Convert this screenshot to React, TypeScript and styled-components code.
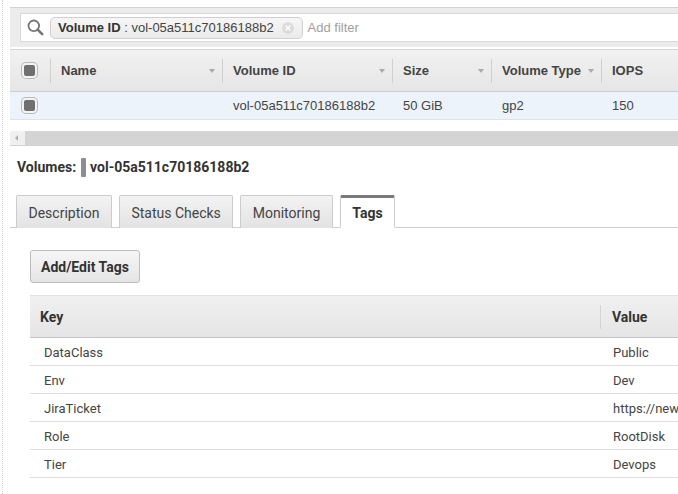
import React from "react";
import styled, { createGlobalStyle } from "styled-components";

const Global = createGlobalStyle`
  html, body { margin: 0; padding: 0; background: #fff; }
  body { width: 678px; height: 494px; overflow: hidden; font-family: Roboto, "Liberation Sans", Arial, sans-serif; }
`;

const Page = styled.div`
  margin-left: 2px;
  border-left: 1px dotted #d0d0d0;
  padding-left: 7px;
  height: 494px;
  box-sizing: border-box;
  padding-top: 7px;
`;

const FilterBar = styled.div`
  background: #ececec;
  border-top: 1px solid #d2d2d2;
  padding: 5px 0 5px 10px;
`;

const SearchBox = styled.div`
  height: 29px;
  box-sizing: border-box;
  background: #fff;
  border: 1px solid #d9d9d9;
  border-right: none;
  display: flex;
  align-items: center;
  padding-left: 6px;
  gap: 6px;
  font-family: "Liberation Sans", Arial, sans-serif;
  font-size: 13px;
`;

const Chip = styled.div`
  height: 22px;
  box-sizing: border-box;
  border: 1px solid #cfcfcf;
  border-radius: 5px;
  background: linear-gradient(#f6f6f6, #ebebeb);
  display: flex;
  align-items: center;
  padding: 0 8px 0 7px;
  color: #444;
  font-size: 13px;
  b { color: #333; }
`;

const ChipClose = styled.span`
  display: inline-flex;
  width: 12px;
  height: 12px;
  margin-left: 8px;
`;

const Placeholder = styled.span`
  color: #9f9f9f;
  margin-left: -1px;
`;

const Grid = styled.div`
  display: grid;
  grid-template-columns: 40px 172px 170px 99px 110px 1fr;
  font-family: "Liberation Sans", Arial, sans-serif;
  font-size: 13px;
  color: #444;
`;

const HeadRow = styled(Grid)`
  margin-top: 2px;
  height: 43px;
  box-sizing: border-box;
  border-top: 1px solid #d6d6d6;
  border-bottom: 1px solid #cdcdcd;
  background: linear-gradient(#f1f1f1, #e6e6e6);
  font-weight: bold;
`;

const HeadCell = styled.div<{ $sep?: boolean }>`
  position: relative;
  display: flex;
  align-items: center;
  padding: 0 7px 0 11px;
  justify-content: space-between;
  &::before {
    content: "";
    display: ${(p) => (p.$sep ? "block" : "none")};
    position: absolute;
    left: 0;
    top: 9px;
    height: 24px;
    width: 1px;
    background: #d0d0d0;
  }
`;

const CheckCell = styled.div`
  display: flex;
  align-items: center;
  padding-left: 12px;
`;

const Check = styled.span`
  display: block;
  width: 15px;
  height: 15px;
  box-sizing: border-box;
  border-radius: 4px;
  background: #6f6f6f;
  border: 2px solid #f3f3f3;
  box-shadow: 0 0 0 1px #b9b9b9;
`;

const SortArrow = styled.span`
  width: 0;
  height: 0;
  border-left: 3.5px solid transparent;
  border-right: 3.5px solid transparent;
  border-top: 4px solid #aaa;
`;

const BodyRow = styled(Grid)`
  height: 28px;
  box-sizing: border-box;
  background: #edf3fb;
  border-bottom: 1px solid #dde3ea;
`;

const BodyCell = styled.div`
  display: flex;
  align-items: center;
  padding-left: 11px;
  white-space: nowrap;
`;

const Scrollbar = styled.div`
  margin-top: 11px;
  height: 14px;
  display: flex;
  border-bottom: 1px solid #d4d4d4;
`;

const ScrollArrow = styled.div`
  width: 15px;
  background: #f0f0f0;
  display: flex;
  align-items: center;
  padding-left: 5px;
  box-sizing: border-box;
  &::after {
    content: "";
    border-top: 3px solid transparent;
    border-bottom: 3px solid transparent;
    border-right: 3px solid #b0b0b0;
  }
`;

const ScrollThumb = styled.div`
  flex: 1;
  background: #d4d4d4;
`;

const Title = styled.div`
  margin: 11px 0 0 7px;
  height: 20px;
  display: flex;
  align-items: center;
  font-weight: bold;
  font-size: 14px;
  color: #333;
`;

const TitleMark = styled.span`
  width: 5px;
  height: 19px;
  background: #8b8f94;
  border-radius: 1px;
  margin: 0 4px 0 5px;
`;

const TabBar = styled.div`
  margin-top: 18px;
  display: flex;
  gap: 7px;
  padding-left: 6px;
  border-bottom: 1px solid #cfcfcf;
  height: 33px;
  box-sizing: border-box;
`;

const Tab = styled.div<{ $active?: boolean }>`
  height: 33px;
  box-sizing: border-box;
  padding: 0 11.5px;
  display: flex;
  align-items: center;
  font-size: 14px;
  color: ${(p) => (p.$active ? "#333" : "#444")};
  font-weight: ${(p) => (p.$active ? "bold" : "normal")};
  background: ${(p) => (p.$active ? "#fff" : "linear-gradient(#f3f3f3, #e3e3e3)")};
  border: 1px solid #cccccc;
  border-top: ${(p) => (p.$active ? "3px solid #7a7a7a" : "1px solid #cccccc")};
  border-bottom: ${(p) => (p.$active ? "1px solid #fff" : "none")};
  border-radius: 2px 2px 0 0;
  padding-top: ${(p) => (p.$active ? "0" : "2px")};
`;

const Content = styled.div`
  padding: 22px 0 0 20px;
`;

const Button = styled.button`
  height: 33px;
  padding: 0 10px;
  border: 1px solid #bdbdbd;
  border-radius: 3px;
  background: linear-gradient(#f6f6f6, #e5e5e5);
  font-family: Roboto, "Liberation Sans", Arial, sans-serif;
  font-weight: bold;
  font-size: 14px;
  color: #333;
`;

const TagTable = styled.div`
  margin-top: 12px;
  display: grid;
  grid-template-columns: 570px 1fr;
  font-size: 13px;
  color: #444;
`;

const TagHead = styled.div<{ $sep?: boolean }>`
  position: relative;
  height: 43px;
  box-sizing: border-box;
  background: linear-gradient(#f0f0f0, #e5e5e5);
  border-top: 1px solid #e2e2e2;
  border-bottom: 1px solid #c4c4c4;
  display: flex;
  align-items: center;
  padding-left: ${(p) => (p.$sep ? "12px" : "10px")};
  font-weight: bold;
  font-size: 14px;
  color: #333;
  &::before {
    content: "";
    display: ${(p) => (p.$sep ? "block" : "none")};
    position: absolute;
    left: 0;
    top: 9px;
    height: 24px;
    width: 1px;
    background: #d4d4d4;
  }
`;

const TagCell = styled.div<{ $value?: boolean }>`
  height: 28px;
  box-sizing: border-box;
  border-bottom: 1px solid #dedede;
  display: flex;
  align-items: center;
  padding-left: ${(p) => (p.$value ? "13px" : "14px")};
  padding-top: 2px;
  white-space: nowrap;
  overflow: hidden;
`;

const SearchIcon = () => (
  <svg width="17" height="17" viewBox="0 0 17 17">
    <circle cx="6.8" cy="6.8" r="5.3" fill="none" stroke="#757575" strokeWidth="1.8" />
    <path d="M10.6 10.6 L15.2 15.2" stroke="#757575" strokeWidth="2.6" strokeLinecap="round" />
  </svg>
);

const CloseIcon = () => (
  <svg width="12" height="12" viewBox="0 0 12 12">
    <circle cx="6" cy="6" r="6" fill="#dcdcdc" />
    <path d="M3.8 3.8 L8.2 8.2 M8.2 3.8 L3.8 8.2" stroke="#fff" strokeWidth="1.5" />
  </svg>
);

const columns = [
  { label: "Name", sort: true },
  { label: "Volume ID", sort: true },
  { label: "Size", sort: true },
  { label: "Volume Type", sort: true },
  { label: "IOPS", sort: false },
];

const tags = [
  ["DataClass", "Public"],
  ["Env", "Dev"],
  ["JiraTicket", "https://new"],
  ["Role", "RootDisk"],
  ["Tier", "Devops"],
];

export default function App() {
  return (
    <>
      <Global />
      <Page>
        <FilterBar>
          <SearchBox>
            <SearchIcon />
            <Chip>
              <b>Volume ID</b>&nbsp;: vol-05a511c70186188b2
              <ChipClose>
                <CloseIcon />
              </ChipClose>
            </Chip>
            <Placeholder>Add filter</Placeholder>
          </SearchBox>
        </FilterBar>
        <HeadRow>
          <CheckCell>
            <Check />
          </CheckCell>
          {columns.map((c) => (
            <HeadCell key={c.label} $sep>
              <span>{c.label}</span>
              {c.sort && <SortArrow />}
            </HeadCell>
          ))}
        </HeadRow>
        <BodyRow>
          <CheckCell>
            <Check />
          </CheckCell>
          <BodyCell />
          <BodyCell>vol-05a511c70186188b2</BodyCell>
          <BodyCell>50 GiB</BodyCell>
          <BodyCell>gp2</BodyCell>
          <BodyCell>150</BodyCell>
        </BodyRow>
        <Scrollbar>
          <ScrollArrow />
          <ScrollThumb />
        </Scrollbar>
        <Title>
          Volumes:
          <TitleMark />
          vol-05a511c70186188b2
        </Title>
        <TabBar>
          <Tab>Description</Tab>
          <Tab>Status Checks</Tab>
          <Tab>Monitoring</Tab>
          <Tab $active>Tags</Tab>
        </TabBar>
        <Content>
          <Button>Add/Edit Tags</Button>
          <TagTable>
            <TagHead>Key</TagHead>
            <TagHead $sep>Value</TagHead>
            {tags.map(([k, v]) => (
              <React.Fragment key={k}>
                <TagCell>{k}</TagCell>
                <TagCell $value>{v}</TagCell>
              </React.Fragment>
            ))}
          </TagTable>
        </Content>
      </Page>
    </>
  );
}
